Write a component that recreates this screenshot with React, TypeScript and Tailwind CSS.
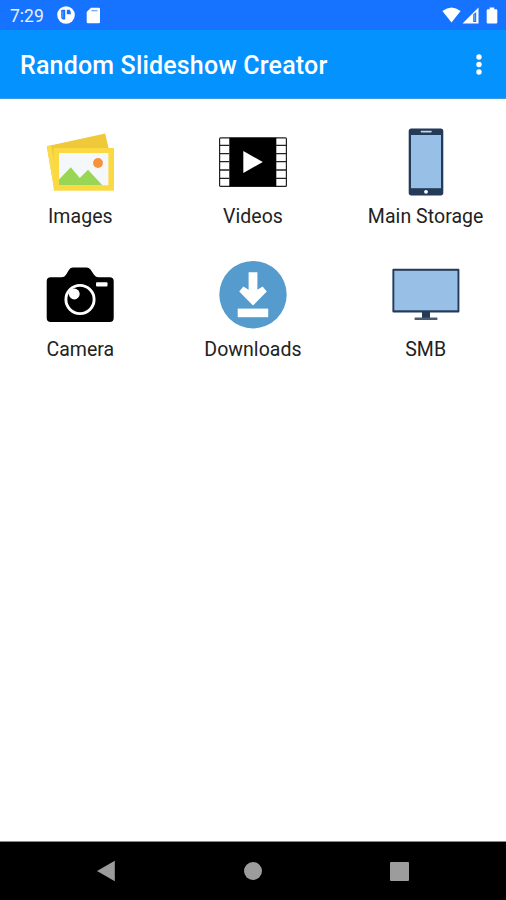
import type { ReactNode } from 'react';

interface Tile {
  id: string;
  label: string;
  icon: ReactNode;
}

const iconClass = 'w-[68px] h-[68px] block';

function ImagesIcon() {
  return (
    <svg viewBox="0 0 68 68" className={iconClass}>
      <path d="M.8 18.2 59.2 5.6 63 22 20 62 8 60.5Z" fill="#f0c93a" />
      <path d="M.8 18.2 5 17.3 9 40V60.5H8Z" fill="#fadb4a" />
      <rect x="7.7" y="20" width="60.3" height="42.7" fill="#fbd943" />
      <rect x="13" y="25" width="49.4" height="32.3" fill="#f5f8fb" />
      <path d="M13 51.5 24.8 39.2 33.8 50 42 41.7 56.4 57.3H13Z" fill="#9ad655" />
      <circle cx="52" cy="35" r="4.9" fill="#f7923a" />
    </svg>
  );
}

function VideosIcon() {
  return (
    <svg viewBox="0 0 68 68" className={iconClass}>
      <rect x=".6" y="9.8" width="66.8" height="48.6" rx="1" fill="#fff" stroke="#222" strokeWidth="1.2" />
      <rect x="10.3" y="9.8" width="47" height="48.4" fill="#000" />
      <path
        d="M0 17.4H10.5M0 25.6H10.5M0 33.6H10.5M0 42H10.5M0 50.3H10.5M57 17.4H68M57 25.6H68M57 33.6H68M57 42H68M57 50.3H68"
        stroke="#222"
        strokeWidth="1.3"
      />
      <path d="M24.3 23 43.8 34 24.3 44.9Z" fill="#fff" />
    </svg>
  );
}

function PhoneIcon() {
  return (
    <svg viewBox="0 0 68 68" className={iconClass}>
      <rect x="16.7" y=".4" width="34.6" height="67" rx="2.6" fill="#233a58" />
      <rect x="19" y="7" width="30" height="53.2" fill="#98c0e6" />
      <rect x="28.6" y="2.8" width="11.2" height="1.6" rx=".8" fill="#c3d5e8" />
      <circle cx="34" cy="63.8" r="1.9" fill="#fff" />
    </svg>
  );
}

function CameraIcon() {
  return (
    <svg viewBox="0 0 68 68" className={iconClass}>
      <path
        d="M4.7 16.2H15.5Q18.5 16.2 20 13.7L23.2 8.5Q24.5 6.5 27 6.5H40.5Q43 6.5 44.5 8.5L48 13.7Q49.8 16.2 52.5 16.2H63.7Q67.7 16.2 67.7 20.2V56.9Q67.7 60.9 63.7 60.9H4.7Q.7 60.9 .7 56.9V20.2Q.7 16.2 4.7 16.2Z"
        fill="#000"
      />
      <circle cx="34" cy="38.5" r="14.1" fill="none" stroke="#fff" strokeWidth="2.9" />
      <circle cx="28.3" cy="33" r="5.4" fill="#fff" />
      <rect x="50" y="21.3" width="11.5" height="4.2" rx="1" fill="#fff" />
    </svg>
  );
}

function DownloadsIcon() {
  return (
    <svg viewBox="0 0 68 68" className={iconClass}>
      <circle cx="34" cy="33.7" r="33.7" fill="#559bcd" />
      <path d="M29.6 11.2H38.4V28.8L43.6 25.5 47.8 30.6 34 44.4 20.2 30.6 24.4 25.5 29.6 28.8Z" fill="#fff" />
      <rect x="18.7" y="47.6" width="30.5" height="8.6" fill="#fff" />
    </svg>
  );
}

function MonitorIcon() {
  return (
    <svg viewBox="0 0 68 68" className={iconClass}>
      <rect x=".4" y="7.8" width="67" height="43.6" rx="1" fill="#233a58" />
      <rect x="2.3" y="9.8" width="63.2" height="39.5" fill="#98c0e6" />
      <rect x="30" y="51" width="8" height="6" fill="#233a58" />
      <rect x="22.6" y="56.6" width="22.8" height="2.5" rx=".6" fill="#4a5b70" />
    </svg>
  );
}

const tiles: Tile[] = [
  { id: 'images', label: 'Images', icon: <ImagesIcon /> },
  { id: 'videos', label: 'Videos', icon: <VideosIcon /> },
  { id: 'storage', label: 'Main Storage', icon: <PhoneIcon /> },
  { id: 'camera', label: 'Camera', icon: <CameraIcon /> },
  { id: 'downloads', label: 'Downloads', icon: <DownloadsIcon /> },
  { id: 'smb', label: 'SMB', icon: <MonitorIcon /> },
];

function StatusBar() {
  return (
    <div className="h-[30px] shrink-0 bg-[#1573ff] flex items-center pl-[10px] pr-2 text-white">
      <span className="text-[17.5px] leading-none w-[47px] pt-[3px] text-[#e8f1ff]">7:29</span>
      <svg viewBox="0 0 18 18" className="w-[18px] h-[18px]">
        <circle cx="9" cy="9" r="8.8" fill="#fff" />
        <path d="M4.2 4.6Q4.2 3.8 5 3.8H8.2V13.6H6Q4.2 13 4.2 11Z" fill="#1573ff" />
        <path d="M5.8 5.4V11.6" stroke="#fff" strokeOpacity=".35" strokeWidth="1" />
        <path d="M9.8 3.8H12.6Q13.9 4.8 13.9 8.3H9.8Z" fill="#1573ff" />
      </svg>
      <svg viewBox="0 0 15 17" className="w-[15px] h-[17px] ml-[11px]">
        <path d="M5 .7H12.7Q14 .7 14 2V15Q14 16.3 12.7 16.3H2Q.7 16.3 .7 15V5Z" fill="#fff" />
        <path d="M5.4 3.6H11.5" stroke="#1573ff" strokeOpacity=".6" strokeWidth="1.4" />
      </svg>
      <div className="ml-auto flex items-center">
        <svg viewBox="0 0 19 16" className="w-[19px] h-4">
          <path d="M.4 4Q9.5-3.2 18.6 4L9.5 15.6Z" fill="#fff" />
        </svg>
        <svg viewBox="0 0 17 17" className="w-[17px] h-[17px] ml-[1px]">
          <path d="M16.5.5V16.5H.5Z" fill="#fff" />
          <path d="M11.2 7.5 14.2 5V15H11.2Z" fill="#1573ff" />
          <path d="M12.7 7.5V14" stroke="#fff" strokeOpacity=".4" strokeWidth="1" />
        </svg>
        <svg viewBox="0 0 12 17" className="w-3 h-[17px] ml-[7px]">
          <path d="M3.6.6H8.2V2.2H10.2Q11.3 2.2 11.3 3.4V15.2Q11.3 16.4 10.2 16.4H1.8Q.7 16.4 .7 15.2V3.4Q.7 2.2 1.8 2.2H3.6Z" fill="#fff" />
        </svg>
      </div>
    </div>
  );
}

function AppBar() {
  return (
    <header className="h-[69px] shrink-0 bg-[#0492ff] border-b border-[#3d9be6] flex items-center justify-between pl-5 pr-6 text-white">
      <h1 className="text-[25px] font-medium leading-none tracking-[0.17px] whitespace-nowrap pt-[3px]">Random Slideshow Creator</h1>
      <button aria-label="More options">
        <svg viewBox="0 0 6 21" className="w-[6px] h-[21px]">
          <circle cx="3" cy="3" r="2.7" fill="#fff" />
          <circle cx="3" cy="10.5" r="2.7" fill="#fff" />
          <circle cx="3" cy="18" r="2.7" fill="#fff" />
        </svg>
      </button>
    </header>
  );
}

function NavBar() {
  return (
    <nav className="h-[59px] shrink-0 bg-black border-t border-[#8a8a8a] flex items-center justify-between pl-24 pr-[97px]">
      <svg viewBox="0 0 19 22" className="w-[19px] h-[22px]">
        <path d="M18.8.8V21.2L1 11Z" fill="#9c9c9c" />
      </svg>
      <div className="w-[18px] h-[18px] rounded-full bg-[#9c9c9c]" />
      <div className="w-[19px] h-[19px] rounded-[1px] bg-[#9c9c9c]" />
    </nav>
  );
}

export default function App() {
  return (
    <div className="w-full h-screen flex flex-col bg-white overflow-hidden font-[Roboto,sans-serif]">
      <StatusBar />
      <AppBar />

      {/* Media sources */}
      <main className="flex-1 pt-[29px]">
        <div className="grid grid-cols-3 gap-x-3">
          {tiles.map((tile) => (
            <button key={tile.id} className="h-[132.5px] flex flex-col items-center">
              {tile.icon}
              <span className="mt-[9px] text-[19.5px] leading-6 tracking-[0.05px] whitespace-nowrap text-[#222]">{tile.label}</span>
            </button>
          ))}
        </div>
      </main>

      <NavBar />
    </div>
  );
}
